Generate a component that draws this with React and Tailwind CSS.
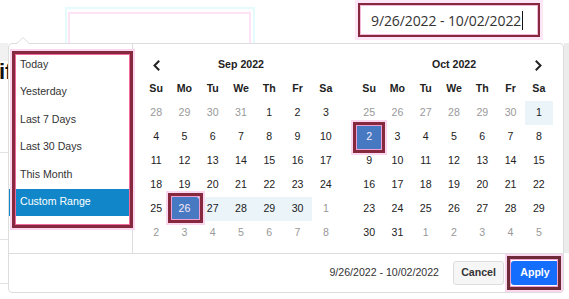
import React from "react";

const sep = [
  [28, 29, 30, 31, 1, 2, 3],
  [4, 5, 6, 7, 8, 9, 10],
  [11, 12, 13, 14, 15, 16, 17],
  [18, 19, 20, 21, 22, 23, 24],
  [25, 26, 27, 28, 29, 30, 1],
  [2, 3, 4, 5, 6, 7, 8],
];
const oct = [
  [25, 26, 27, 28, 29, 30, 1],
  [2, 3, 4, 5, 6, 7, 8],
  [9, 10, 11, 12, 13, 14, 15],
  [16, 17, 18, 19, 20, 21, 22],
  [23, 24, 25, 26, 27, 28, 29],
  [30, 31, 1, 2, 3, 4, 5],
];
const heads = ["Su", "Mo", "Tu", "We", "Th", "Fr", "Sa"];

function sepState(r, c, d) {
  if (r === 0 && d > 20) return "off";
  if (r >= 4 && d < 15) return "off";
  if (d === 26) return "sel";
  if (r === 4 && d > 26) return "range";
  return "on";
}
function octState(r, c, d) {
  if (r === 0 && d > 20) return "off";
  if (r === 5 && d < 15) return "off";
  if (r === 0 && d === 1) return "range";
  if (r === 1 && d === 2) return "sel";
  return "on";
}

function Chevron({ dir }) {
  return (
    <svg width="9" height="11" viewBox="0 0 9 11" className="block">
      <polyline
        points={dir === "left" ? "6.5,1.5 2.5,5.5 6.5,9.5" : "2.5,1.5 6.5,5.5 2.5,9.5"}
        fill="none"
        stroke="#222"
        strokeWidth="2"
        strokeLinecap="square"
      />
    </svg>
  );
}

function Calendar({ title, rows, stateFn, prev, next }) {
  return (
    <div className="w-[198px] grid grid-cols-7 auto-rows-[24px] text-[10.6px] text-[#333]">
      <div className="flex items-center justify-center">{prev && <Chevron dir="left" />}</div>
      <div className="col-span-5 flex items-center justify-center font-bold text-[#222]">{title}</div>
      <div className="flex items-center justify-center">{next && <Chevron dir="right" />}</div>
      {heads.map((h) => (
        <div key={h} className="flex items-center justify-center font-bold text-[#222]">
          {h}
        </div>
      ))}
      {rows.map((row, r) =>
        row.map((d, c) => {
          const s = stateFn(r, c, d);
          let cls = "flex items-center justify-center ";
          if (s === "off") cls += "text-[#999]";
          else if (s === "sel") cls += "bg-[#357ebd] text-white rounded-[3px]";
          else if (s === "range") cls += "bg-[#ebf4f8] text-[#222]";
          else cls += "text-[#222]";
          return (
            <div key={r + "-" + c} className={cls}>
              {d}
            </div>
          );
        })
      )}
    </div>
  );
}

const ranges = ["Today", "Yesterday", "Last 7 Days", "Last 30 Days", "This Month", "Custom Range"];

export default function App() {
  return (
    <div className="relative w-[569px] h-[299px] overflow-hidden bg-white font-['Liberation_Sans',Arial,sans-serif]">
      {/* page behind the popup */}
      <div className="absolute left-0 top-[43px] w-[8px] h-[18px] bg-[#f1f1f1]" />
      <div className="absolute left-[-1px] top-[61px] text-[22px] font-bold leading-none text-[#111]">if</div>
      <div className="absolute left-0 top-[152px] w-[8px] h-px bg-[#e3e3e3]" />
      <div className="absolute left-0 top-[239px] w-[8px] h-px bg-[#e3e3e3]" />
      <div className="absolute left-0 top-[283px] w-[8px] h-px bg-[#e3e3e3]" />
      <div className="absolute left-[564px] top-[43px] w-[5px] h-[210px] bg-[#ececec]" />
      {/* ghost annotation remnants */}
      <div className="absolute left-[65px] top-[7px] w-[190px] h-[60px] border-2 border-[#e4fafc]" />
      <div className="absolute left-[68px] top-[12px] w-[183px] h-[55px] border-2 border-[#fde3f5]" />

      {/* input */}
      <div className="flex justify-end pr-[26px]">
        <div className="bg-[#fde7f6] p-[3px]">
          <div className="w-[182px] h-[34px] border-[2.5px] border-[#86293f] bg-white flex items-center pl-[11px] shadow-[inset_0_0_0_1px_#f3b8d8]">
            <span className="font-['Open_Sans',sans-serif] text-[14px] text-[#333] tracking-[-0.1px]">9/26/2022 - 10/02/2022</span>
            <span className="ml-px w-px h-[19px] bg-[#111]" />
          </div>
        </div>
      </div>

      {/* popup */}
      <div className="absolute left-[8px] top-[43px] w-[556px] h-[250px] border border-[#ddd] rounded-[4px] bg-white flex flex-col">
        <div className="absolute left-[7px] top-[-7px] w-0 h-0 border-x-[7px] border-x-transparent border-b-[7px] border-b-[#ddd]" />
        <div className="absolute left-[8px] top-[-6px] w-0 h-0 border-x-[6px] border-x-transparent border-b-[6px] border-b-white" />
        <div className="flex h-[209px]">
          <div className="w-[124px] border-r border-[#ddd] pt-[7px] text-[10.6px] text-[#333]">
            {ranges.map((r) => (
              <div
                key={r}
                className={
                  "h-[27.5px] flex items-center pl-[11px] " +
                  (r === "Custom Range" ? "bg-[#1187c9] text-white" : "")
                }
              >
                {r}
              </div>
            ))}
          </div>
          <div className="flex gap-[15px] pl-[9px] pt-[9px]">
            <Calendar title="Sep 2022" rows={sep} stateFn={sepState} prev />
            <Calendar title="Oct 2022" rows={oct} stateFn={octState} next />
          </div>
        </div>
        <div className="h-[39px] border-t border-[#ddd] flex items-center justify-end pr-[4px] text-[10.6px]">
          <span className="text-[#333] mr-[14px]">9/26/2022 - 10/02/2022</span>
          <button className="w-[51px] h-[24px] rounded-[3px] border border-[#ddd] bg-[#f6f6f6] font-bold text-[#333] mr-[7px]">
            Cancel
          </button>
          <button className="w-[48px] h-[24px] rounded-[3px] bg-[#146dfc] font-bold text-white">Apply</button>
        </div>
      </div>

      {/* annotation boxes */}
      <div className="absolute left-[12px] top-[51px] w-[121px] h-[177px] border-[3px] border-[#86293f] shadow-[0_0_0_2px_#fbd6ef,inset_0_0_0_1px_#f06a9a]" />
      <div className="absolute left-[168px] top-[193px] w-[35px] h-[30px] border-[3px] border-[#86293f] bg-[rgba(200,90,220,0.12)] shadow-[0_0_0_2px_#fbd6ef,inset_0_0_0_1px_#f0a0d0]" />
      <div className="absolute left-[353px] top-[122px] w-[32px] h-[31px] border-[3px] border-[#86293f] bg-[rgba(200,90,220,0.12)] shadow-[0_0_0_2px_#fbd6ef,inset_0_0_0_1px_#f0a0d0]" />
      <div className="absolute left-[507px] top-[256px] w-[54px] h-[34px] border-[3px] border-[#6f2a38] shadow-[0_0_0_2px_#fbd6ef,inset_0_0_0_1px_#f0a0d0]" />
    </div>
  );
}
